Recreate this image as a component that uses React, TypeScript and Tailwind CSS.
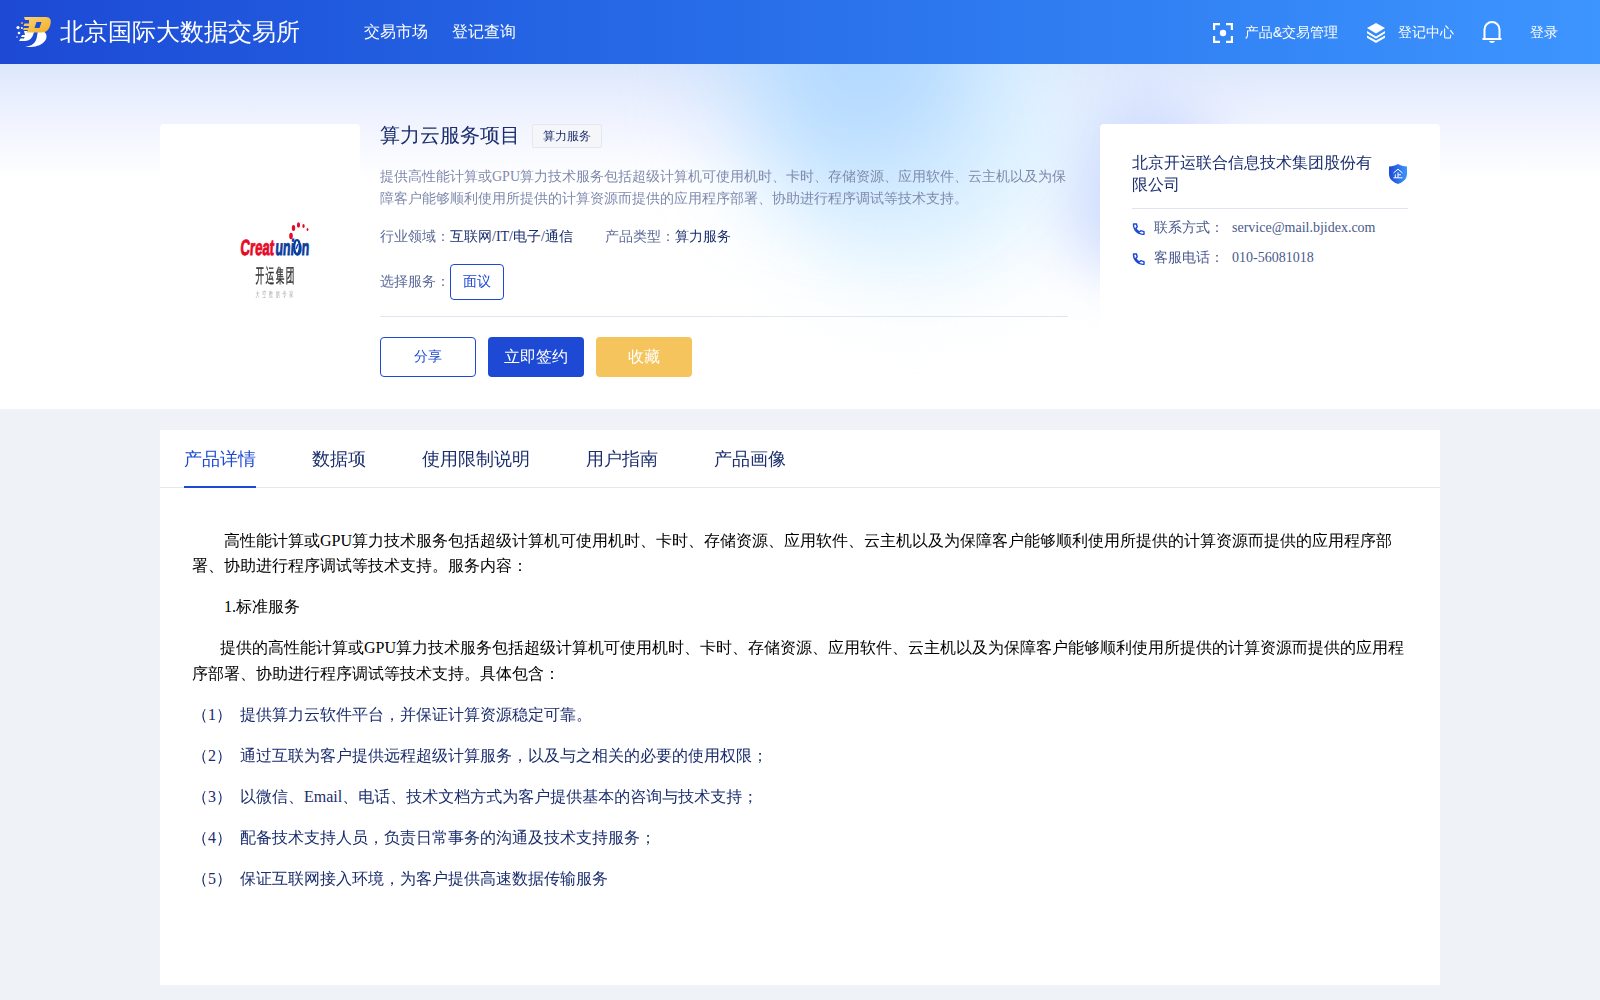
import React from 'react';

const tabs = ['产品详情', '数据项', '使用限制说明', '用户指南', '产品画像'];

const services = [
  '提供算力云软件平台，并保证计算资源稳定可靠。',
  '通过互联为客户提供远程超级计算服务，以及与之相关的必要的使用权限；',
  '以微信、Email、电话、技术文档方式为客户提供基本的咨询与技术支持；',
  '配备技术支持人员，负责日常事务的沟通及技术支持服务；',
  '保证互联网接入环境，为客户提供高速数据传输服务',
];

const contacts = [
  { label: '联系方式', value: 'service@mail.bjidex.com' },
  { label: '客服电话', value: '010-56081018' },
];

function BrandLogo() {
  return (
    <svg width="36" height="32" viewBox="0 0 36 32" className="shrink-0">
      <defs>
        <linearGradient id="gold" x1="0" y1="0" x2="1" y2="1">
          <stop offset="0" stopColor="#f9d27a" />
          <stop offset="1" stopColor="#f2b022" />
        </linearGradient>
      </defs>
      <path
        d="M27 15c4 2 5 7 1 11-4 4-10 5.500-19 5 6-1 9-3 11-7 1-2 1-5 2-9zM8 15h10c-.500 6-4 10-9 10H3l1.500-2.500H8l.5-1.500H5l1-2h3z"
        fill="#fff"
      />
      <path
        fillRule="evenodd"
        d="M8 1h22c4 0 5.500 3 4.500 7-1 5-4 8.500-9 8.500H10l2-2.500H7l.8-2h4.700l.5-2H7.500l1-2.500H13V4H9zM20.500 6l-2 6h5l2-6z"
        fill="url(#gold)"
      />
      <circle cx="6" cy="7" r="1" fill="#f5b52d" />
      <circle cx="2" cy="11.500" r="1.600" fill="#fff" />
      <circle cx="5.800" cy="12" r="1" fill="#fff" />
      <circle cx="3" cy="17" r="1.300" fill="#fff" />
      <circle cx="1" cy="21" r=".7" fill="#fff" />
    </svg>
  );
}

function ScanIcon() {
  return (
    <svg width="20" height="20" viewBox="0 0 20 20" fill="none" stroke="#fff" strokeWidth="2.200">
      <path d="M1.100 7V1.100H7M13 1.100h5.900V7M18.900 13v5.900H13M7 18.900H1.100V13" />
      <circle cx="10" cy="10" r="3.200" fill="#fff" stroke="none" />
    </svg>
  );
}

function LayersIcon() {
  return (
    <svg width="18" height="20" viewBox="0 0 18 20" fill="#fff">
      <path d="M9 0l9 5-9 5.500L0 5z" />
      <path d="M0 8l9 5.500L18 8v2.300l-9 5.500-9-5.500z" />
      <path d="M0 12.400l9 5.200 9-5.200v2.300L9 20l-9-5.300z" />
    </svg>
  );
}

function BellIcon() {
  return (
    <svg width="20" height="22" viewBox="0 0 20 22" fill="none" stroke="#fff" strokeWidth="2">
      <path d="M2.500 18V8.500a7.500 7.500 0 0 1 15 0V18M.5 18h19" />
      <path d="M7 20h6c-.6 1.300-1.600 2-3 2s-2.400-.7-3-2z" fill="#fff" stroke="none" />
    </svg>
  );
}

function PhoneIcon() {
  return (
    <svg width="13" height="13" viewBox="0 0 13 13" fill="none" stroke="#1d49d5" strokeWidth="1.400" strokeLinejoin="round">
      <path d="M1.500 1h3l.7 3-1.400 1.200c.8 1.700 2 3 3.600 3.800l1.400-1.300 3.200.9v2.700C6.600 12.200 1.200 7 1.500 1z" />
    </svg>
  );
}

function CompanyBadge() {
  return (
    <svg width="18" height="20" viewBox="0 0 18 20" className="mr-px shrink-0">
      <defs>
        <linearGradient id="shield">
          <stop offset="0" stopColor="#1d49d5" />
          <stop offset="1" stopColor="#3d95ff" />
        </linearGradient>
      </defs>
      <path d="M9 0c2.500 1.600 5.500 2.400 9 2.500V10c0 5-4 8.200-9 10-5-1.800-9-5-9-10V2.500C3.500 2.400 6.500 1.600 9 0z" fill="url(#shield)" />
      <path d="M4.500 9L9 5.200 13.500 9M9 8.500v5.300M9 10.800h3M6.300 10.300v3.500M4.500 13.800h9" fill="none" stroke="#fff" />
    </svg>
  );
}

function CreatunionLogo() {
  return (
    <svg width="70" height="78" viewBox="0 0 70 78" className="overflow-visible">
      <g fontSize="22" fontFamily="'Liberation Sans', sans-serif" fontWeight="700" strokeWidth=".9">
        <text transform="translate(0 34) skewX(-4) scale(.6 1)" fill="#e60a28" stroke="#e60a28">Creat</text>
        <text transform="translate(35 34) skewX(-4) scale(.565 1)" fill="#0a3c9b" stroke="#0a3c9b">union</text>
      </g>
      <ellipse cx="57" cy="26" rx="2.800" ry="7" fill="#fff" stroke="#0a3c9b" strokeWidth="2.200" />
      <path d="M56 28l2-5" stroke="#0a3c9b" strokeWidth="1.300" />
      <g fill="#e60a28">
        <ellipse cx="51" cy="15" rx="1.800" ry="3.200" />
        <ellipse cx="53.500" cy="7" rx="1.700" ry="3" />
        <ellipse cx="58.500" cy="4" rx="1.600" ry="2.800" />
        <ellipse cx="63.500" cy="5" rx="1.200" ry="2" />
        <ellipse cx="67.500" cy="8.500" rx=".9" ry="1.500" />
      </g>
      <g fontFamily="'WenQuanYi Zen Hei', 'Noto Sans CJK SC', sans-serif">
        <text transform="translate(15.500 60.500) scale(.46 1)" fontSize="19" letterSpacing="3" fill="#333" stroke="#333" strokeWidth=".4">开运集团</text>
        <text transform="translate(15.500 76) scale(.5 1)" fontSize="8" letterSpacing="5.500" fill="#a8a8a8">大空数据专家</text>
      </g>
    </svg>
  );
}

function Header() {
  return (
    <header className="flex h-16 items-center bg-linear-to-r from-[#1d49d5] to-[#3d95ff] pl-4 font-['Liberation_Sans','WenQuanYi_Zen_Hei','Noto_Sans_CJK_SC',sans-serif] text-white">
      <BrandLogo />
      <h1 className="ml-2 text-2xl">北京国际大数据交易所</h1>
      <nav className="ml-16 flex gap-6 text-base">
        <a>交易市场</a>
        <a>登记查询</a>
      </nav>
      <div className="ml-auto flex items-center pr-[42px] text-sm">
        <span className="mt-0.5"><ScanIcon /></span>
        <span className="ml-3">产品&amp;交易管理</span>
        <span className="mt-0.5 ml-[29px]"><LayersIcon /></span>
        <span className="ml-[13px]">登记中心</span>
        <span className="ml-[28px]"><BellIcon /></span>
        <span className="ml-7">登录</span>
      </div>
    </header>
  );
}

function Hero() {
  return (
    <section className="relative h-[345px] overflow-hidden bg-linear-to-b from-[#dde8fc] via-[#f1f4ff] via-[60px] to-white to-[115px]">
      {/* soft colour blobs behind the product summary */}
      <div className="absolute top-6 left-[1055px] h-[190px] w-[170px] rounded-full bg-[#d2defe] blur-[28px]" />
      <div className="absolute -top-24 left-[755px] h-[310px] w-[320px] rounded-full bg-[#e0f3ff] blur-[45px]" />
      <div className="absolute -top-44 left-[745px] h-[290px] w-[235px] rounded-full bg-[#b2d8ff] blur-[55px]" />
      <div className="relative mx-auto flex w-[1280px] pt-15">
        <div className="flex h-[272px] w-[200px] shrink-0 items-center justify-center rounded bg-white pl-[29px]">
          <CreatunionLogo />
        </div>

        <div className="ml-5 w-[688px]">
          <div className="flex h-6 items-center">
            <h2 className="-mt-0.5 text-xl leading-[22px]">算力云服务项目</h2>
            <span className="ml-3 flex h-6 items-center rounded-xs border border-[#e4e7ed] bg-[#f5f6fa] px-2.5 text-xs">算力服务</span>
          </div>
          <p className="mt-[18px] text-sm leading-[22px] text-[#7f89ad]">
            提供高性能计算或GPU算力技术服务包括超级计算机可使用机时、卡时、存储资源、应用软件、云主机以及为保障客户能够顺利使用所提供的计算资源而提供的应用程序部署、协助进行程序调试等技术支持。
          </p>
          <div className="mt-4 flex gap-8 text-sm leading-[22px]">
            <span><span className="text-[#5c6a97]">行业领域：</span>互联网/IT/电子/通信</span>
            <span><span className="text-[#5c6a97]">产品类型：</span>算力服务</span>
          </div>
          <div className="mt-4 flex items-center border-b border-[#e4e6ef] pb-4 text-sm">
            <span className="text-[#5c6a97]">选择服务：</span>
            <button className="h-9 w-[54px] rounded border border-[#1d49d5] bg-white text-[#1d49d5]">面议</button>
          </div>
          <div className="mt-5 flex gap-3 text-base text-white">
            <button className="h-10 w-24 rounded border border-[#1d49d5] bg-white text-sm text-[#1d49d5]">分享</button>
            <button className="h-10 w-24 rounded bg-[#1d49d5]">立即签约</button>
            <button className="h-10 w-24 rounded bg-[#f5c45c]">收藏</button>
          </div>
        </div>

        <aside className="ml-8 h-[253px] w-[340px] rounded bg-white px-8 pt-7">
          <div className="flex items-center justify-between border-b border-[#e1e4ee] pb-3">
            <h3 className="w-[240px] text-base leading-[22px]">北京开运联合信息技术集团股份有限公司</h3>
            <CompanyBadge />
          </div>
          <ul className="mt-2 space-y-2 text-sm leading-[22px] text-[#4a5a8d]">
            {contacts.map((contact) => (
              <li key={contact.label} className="flex items-center">
                <span className="mt-0.5 mr-[9px]"><PhoneIcon /></span>
                <span>{contact.label}：</span>
                <span className="ml-2">{contact.value}</span>
              </li>
            ))}
          </ul>
        </aside>
      </div>
    </section>
  );
}

function Details() {
  return (
    <main className="mx-auto mt-[21px] h-[555px] w-[1280px] bg-white">
      <div className="flex h-[58px] gap-14 border-b border-[#e4e7ed] px-6 text-lg">
        {tabs.map((tab, index) => (
          <button
            key={tab}
            className={index === 0 ? '-mb-px border-b-2 border-[#1d49d5] pt-0.5 text-[#1d49d5]' : '-mb-px border-b-2 border-transparent pt-0.5'}
          >
            {tab}
          </button>
        ))}
      </div>
      <div className="space-y-4 px-8 pt-10 text-base leading-[1.5715]">
        <p className="indent-8 text-black">
          高性能计算或GPU算力技术服务包括超级计算机可使用机时、卡时、存储资源、应用软件、云主机以及为保障客户能够顺利使用所提供的计算资源而提供的应用程序部署、协助进行程序调试等技术支持。服务内容：
        </p>
        <p className="indent-8 text-black">1.标准服务</p>
        <p className="indent-7 text-black">
          提供的高性能计算或GPU算力技术服务包括超级计算机可使用机时、卡时、存储资源、应用软件、云主机以及为保障客户能够顺利使用所提供的计算资源而提供的应用程序部署、协助进行程序调试等技术支持。具体包含：
        </p>
        {services.map((service, index) => (
          <p key={service} className="flex gap-2">
            <span>（{index + 1}）</span>
            <span>{service}</span>
          </p>
        ))}
      </div>
    </main>
  );
}

export default function App() {
  return (
    <div className="h-[1000px] overflow-hidden bg-[#eff3f8] font-['Liberation_Serif','WenQuanYi_Zen_Hei','Noto_Sans_CJK_SC',serif] text-[#1a2d6d]">
      <Header />
      <Hero />
      <Details />
    </div>
  );
}
